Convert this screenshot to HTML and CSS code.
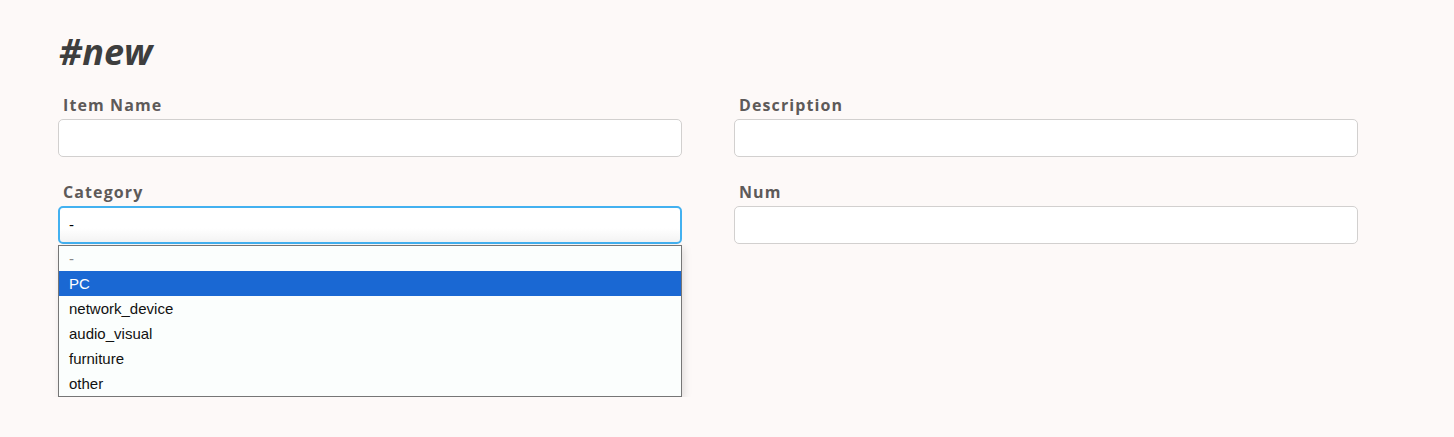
FILE: index.html
```html
<!DOCTYPE html>
<html lang="en">
<head>
  <meta charset="UTF-8">
  <meta name="viewport" content="width=device-width, initial-scale=1.0">
  <title>#new</title>
  <link rel="stylesheet" href="styles.css">
</head>
<body>

<div class="page">
  <h1 class="title">#new</h1>
  <form class="item-form">
    <div class="field">
      <label for="itemName">Item Name</label>
      <input type="text" id="itemName">
    </div>
    <div class="field">
      <label for="description">Description</label>
      <input type="text" id="description">
    </div>
    <div class="field category">
      <label>Category</label>
      <div class="select-box">-</div>
      <div class="choice-list">
        <div class="choice placeholder">-</div>
        <div class="choice selected">PC</div>
        <div class="choice">network_device</div>
        <div class="choice">audio_visual</div>
        <div class="choice">furniture</div>
        <div class="choice">other</div>
      </div>
    </div>
    <div class="field">
      <label for="num">Num</label>
      <input type="text" id="num">
    </div>
  </form>
</div>

</body>
</html>
```

FILE: styles.css
```css
body {
  margin: 0;
  padding: 0;
  background-color: #fdf9f8;
  font-family: "Open Sans", "Noto Sans", sans-serif;
  color: #444;
}
.page {
  padding: 28px 58px 0 59px;
}
.title {
  margin: 0 0 18px;
  font-size: 36px;
  font-weight: 700;
  font-style: italic;
  line-height: 48px;
  color: #3e3e3e;
}
.item-form {
  display: grid;
  grid-template-columns: 624px 624px;
  column-gap: 52px;
  row-gap: 24px;
  align-items: start;
  margin-left: -1px;
}
.field label {
  display: block;
  padding-left: 5px;
  margin-bottom: 3px;
  font-size: 16px;
  line-height: 22px;
  font-weight: 700;
  letter-spacing: 1.1px;
  color: #5d5a59;
}
.field input {
  display: block;
  box-sizing: border-box;
  width: 100%;
  height: 38px;
  margin: 0;
  border: 1px solid #d2d0cf;
  border-radius: 5px;
  background-color: #fff;
}
.select-box {
  box-sizing: border-box;
  height: 38px;
  padding: 0 9px;
  border: 2px solid #43b1f0;
  border-radius: 5px;
  background: linear-gradient(#fff 60%, #f3f3f3);
  font-family: "Liberation Sans", Arial, sans-serif;
  font-size: 15px;
  line-height: 34px;
  color: #000;
}
.choice-list {
  margin-top: 1px;
  border: 1px solid #767676;
  background-color: #fbfefd;
  box-shadow: 2px 3px 8px rgba(0, 0, 0, 0.12);
  font-family: "Liberation Sans", Arial, sans-serif;
  font-size: 15px;
  color: #111;
}
.choice {
  height: 25px;
  padding: 0 10px;
  line-height: 26px;
}
.choice.placeholder {
  color: #888;
}
.choice.selected {
  background-color: #1a68d3;
  color: #fff;
}
```
